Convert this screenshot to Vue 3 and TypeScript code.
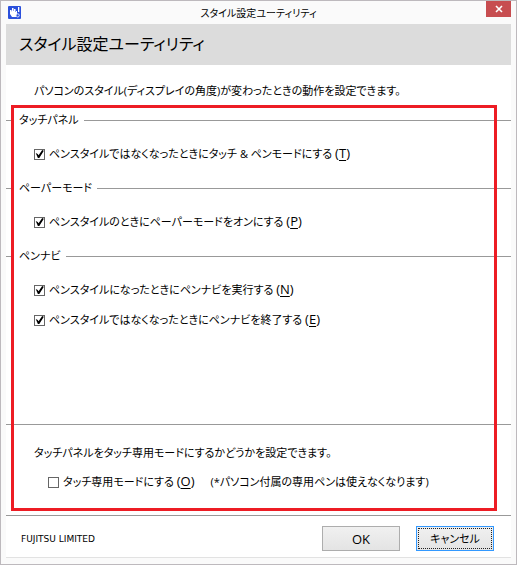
<script setup lang="ts">
import { reactive, ref } from 'vue'

interface Option {
  id: string
  label: string
  key: string
  checked: boolean
}

interface Group {
  title: string
  options: Option[]
}

const groups = reactive<Group[]>([
  {
    title: 'タッチパネル',
    options: [{ id: 'touch-pen', label: 'ペンスタイルではなくなったときにタッチ & ペンモードにする', key: 'T', checked: true }],
  },
  {
    title: 'ペーパーモード',
    options: [{ id: 'paper-on', label: 'ペンスタイルのときにペーパーモードをオンにする', key: 'P', checked: true }],
  },
  {
    title: 'ペンナビ',
    options: [
      { id: 'navi-start', label: 'ペンスタイルになったときにペンナビを実行する', key: 'N', checked: true },
      { id: 'navi-end', label: 'ペンスタイルではなくなったときにペンナビを終了する', key: 'E', checked: true },
    ],
  },
])

const touchOnly = ref<boolean>(false)
</script>

<template>
  <div class="window">
    <header class="titlebar">
      <svg class="app-icon" viewBox="0 0 13 13" aria-hidden="true">
        <rect width="13" height="13" rx="1" fill="#2b50dc" />
        <path d="M2 4h1.4l.6 2V2h1.5v3H6V3h1.5v3H8V5h1v3l-1 3H4L2 8z" fill="#fff" />
        <path d="M10 1h1.3v5H10z" fill="#fff" />
        <circle cx="9.7" cy="9.4" r="1.6" fill="#2b50dc" stroke="#dce4ff" />
      </svg>
      <span class="caption">スタイル設定ユーティリティ</span>
      <button class="close" type="button" aria-label="閉じる">
        <svg viewBox="0 0 8 8" aria-hidden="true"><path d="M1 1l6 6M7 1l-6 6" stroke="#fff" stroke-width="1.6" /></svg>
      </button>
    </header>

    <main class="client">
      <h1 class="banner">スタイル設定ユーティリティ</h1>
      <p class="intro">パソコンのスタイル(ディスプレイの角度)が変わったときの動作を設定できます。</p>

      <div class="settings">
        <div class="groups">
          <section v-for="group in groups" :key="group.title" class="group">
            <h2 class="group-title">{{ group.title }}</h2>
            <div class="options">
              <div v-for="option in group.options" :key="option.id" class="option">
                <input :id="option.id" v-model="option.checked" type="checkbox" />
                <label :for="option.id">{{ option.label }} <span class="key">(<u>{{ option.key }}</u>)</span></label>
              </div>
            </div>
          </section>
        </div>
        <section class="touch-only">
          <p>タッチパネルをタッチ専用モードにするかどうかを設定できます。</p>
          <div class="option nested">
            <input id="touch-only" v-model="touchOnly" type="checkbox" />
            <label for="touch-only">タッチ専用モードにする <span class="key">(<u>O</u>)</span></label>
            <span class="note">(*パソコン付属の専用ペンは使えなくなります)</span>
          </div>
        </section>
        <div class="highlight"></div>
      </div>

      <footer class="footer">
        <span class="company">FUJITSU LIMITED</span>
        <button class="btn ok" type="button">OK</button>
        <button class="btn default" type="button">キャンセル</button>
      </footer>
    </main>
  </div>
</template>

<style>
body {
  margin: 0;
}
</style>

<style scoped>
.window {
  box-sizing: border-box;
  min-height: 100vh;
  display: flex;
  flex-direction: column;
  padding: 0 5px 6px;
  border: 1px solid #bdb9bd;
  background: #fafafa;
  color: #000;
  font-family: "Open Sans", "Noto Sans CJK JP", sans-serif;
  font-size: 11px;
  line-height: 20px;
  font-feature-settings: "palt";
}
.titlebar {
  display: grid;
  grid-template-columns: 25px 1fr 25px;
  align-items: center;
  height: 23px;
}
.app-icon {
  width: 13px;
  height: 13px;
  margin-left: 2px;
}
.caption {
  text-align: center;
  font-size: 10px;
}
.close {
  align-self: start;
  display: flex;
  align-items: center;
  justify-content: center;
  height: 16px;
  padding: 0;
  border: 0;
  background: #c74d50;
}
.close svg {
  width: 8px;
  height: 8px;
}
.client {
  flex: 1;
  display: flex;
  flex-direction: column;
  border-bottom: 1px solid #e2e2e2;
  background: #fff;
}
.banner {
  margin: 0;
  padding: 0 13px;
  background: #dcdcdc;
  font-size: 16px;
  font-weight: 400;
  line-height: 41px;
}
.intro {
  margin: 0;
  padding: 16px 28px 0;
}
.settings {
  position: relative;
  flex: 1;
  display: flex;
  flex-direction: column;
}
.groups {
  flex: 1;
  padding-top: 9px;
}
.group-title {
  display: flex;
  align-items: center;
  gap: 5px;
  margin: 0;
  font-size: 11px;
  font-weight: 400;
}
.group-title::before,
.group-title::after {
  content: "";
  width: 8px;
  height: 1px;
  background: #999;
}
.group-title::after {
  flex: 1;
}
.options {
  display: flex;
  flex-direction: column;
  gap: 10px;
  padding: 14px 28px;
}
.option {
  display: flex;
  align-items: center;
  gap: 4px;
}
.option input {
  appearance: none;
  flex: none;
  display: grid;
  place-items: center;
  box-sizing: border-box;
  width: 11px;
  height: 11px;
  margin: 0;
  border: 1px solid #666;
  background: #fff;
}
.option input:checked::before {
  content: "";
  width: 9px;
  height: 9px;
  background: #000;
  clip-path: polygon(8% 40%, 30% 50%, 40% 65%, 80% 5%, 98% 15%, 48% 95%, 32% 95%);
}
.key {
  font-size: 13px;
  line-height: 16px;
}
.key u {
  text-underline-offset: 2px;
}
.touch-only {
  display: flex;
  flex-direction: column;
  gap: 9px;
  padding: 18px 28px 23px;
  border-top: 1px solid #999;
}
.touch-only p {
  margin: 0;
}
.nested {
  padding-left: 14px;
}
.note {
  margin-left: 12px;
}
.highlight {
  position: absolute;
  inset: 4px 14px 4px 5px;
  border: 3px solid #ed1c24;
  pointer-events: none;
}
.footer {
  display: flex;
  align-items: center;
  gap: 16px;
  padding: 10px 17px 6px 15px;
  border-top: 1px solid #999;
}
.company {
  flex: 1;
  font-family: "DejaVu Sans", sans-serif;
  font-size: 9px;
}
.btn {
  width: 78px;
  height: 25px;
  padding: 0;
  border: 1px solid #adadad;
  background: linear-gradient(#f0f0f0, #e4e4e4);
  color: inherit;
  font: inherit;
  font-feature-settings: inherit;
}
.ok {
  font-size: 13px;
}
.default {
  border-color: #3399ff;
  outline: 1px dotted #222;
  outline-offset: -3px;
}
</style>
